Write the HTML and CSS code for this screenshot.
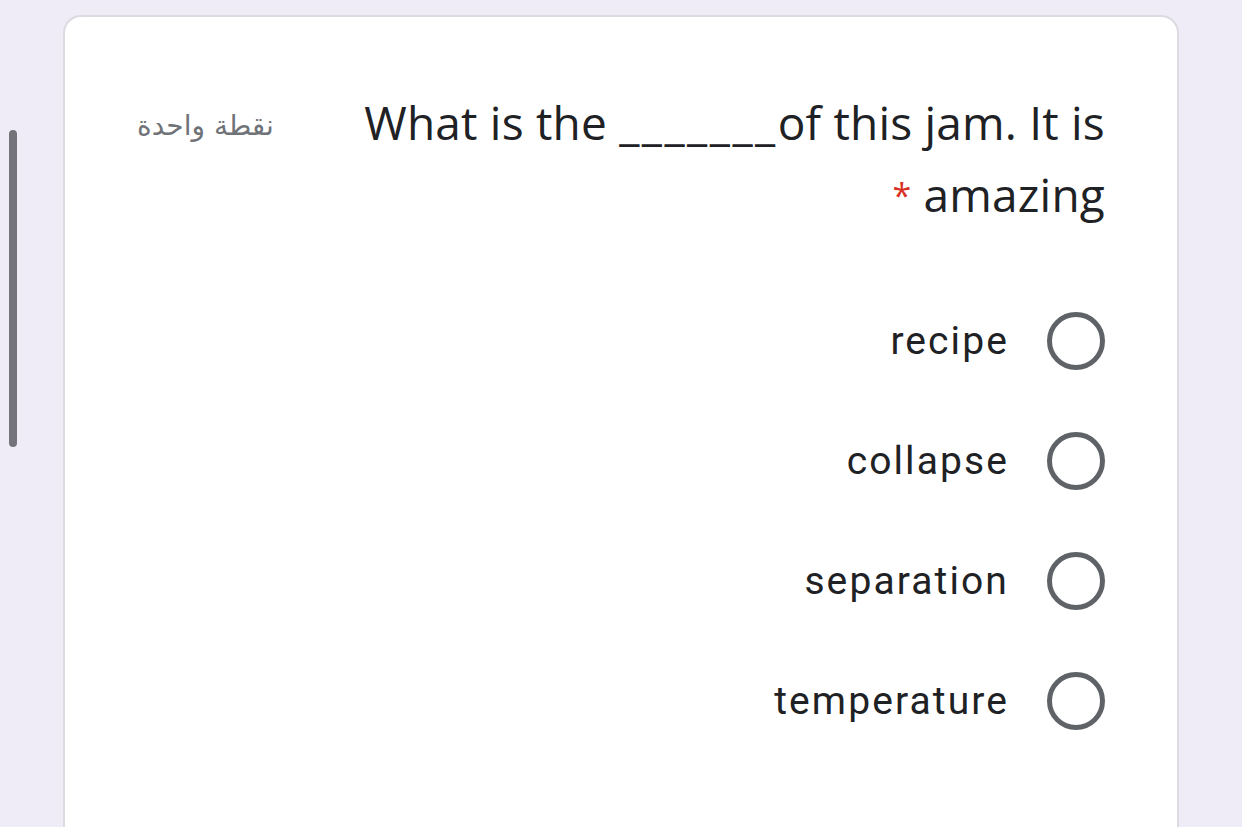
FILE: index.html
```html
<!DOCTYPE html>
<html lang="ar" dir="rtl">
<head>
<meta charset="utf-8">
<link rel="stylesheet" href="styles.css">
</head>
<body>
<div class="page">
  <div class="card">
    <div class="header">
      <div class="title" dir="rtl">What is the <span class="blank">_______</span>of this jam. It is amazing <span class="req">*</span></div>
      <div class="points">نقطة واحدة</div>
    </div>
    <div class="options">
      <label class="option"><span class="radio"></span><span class="label">recipe</span></label>
      <label class="option"><span class="radio"></span><span class="label">collapse</span></label>
      <label class="option"><span class="radio"></span><span class="label">separation</span></label>
      <label class="option"><span class="radio"></span><span class="label">temperature</span></label>
    </div>
  </div>
</div>
<div class="scrollbar"></div>
</body>
</html>
```
FILE: styles.css
```css
html, body {
  margin: 0;
  padding: 0;
  height: 100%;
  overflow: hidden;
  background: #efebf7;
}
.page {
  padding: 15px 63px 0 63px;
}
.card {
  background: #ffffff;
  border: 2px solid #dcdbe2;
  border-radius: 18px;
  height: 840px;
  padding: 69px 72px 0 72px;
  box-sizing: border-box;
  display: flex;
  flex-direction: column;
}
.header {
  display: flex;
  justify-content: space-between;
  align-items: flex-start;
  gap: 24px;
}
.title {
  font-family: "Open Sans", "Roboto", sans-serif;
  font-size: 46px;
  letter-spacing: 0.2px;
  line-height: 72px;
  color: #202124;
  flex: 1;
  text-align: right;
}
.blank {
  letter-spacing: 2.5px;
}
.req {
  color: #d93025;
  font-size: 34px;
  line-height: 1;
  vertical-align: 4px;
  margin-left: 2px;
}
.points {
  font-family: "DejaVu Sans", sans-serif;
  font-size: 28px;
  line-height: 72px;
  color: #6f7378;
  white-space: nowrap;
  padding-top: 4px;
}
.options {
  margin-top: 51px;
  display: flex;
  flex-direction: column;
}
.option {
  display: flex;
  align-items: center;
  height: 120px;
  gap: 38px;
}
.radio {
  width: 58px;
  height: 58px;
  box-sizing: border-box;
  border: 5px solid #5f6368;
  border-radius: 50%;
  flex: none;
}
.label {
  font-family: "Roboto", sans-serif;
  font-size: 39px;
  letter-spacing: 2.1px;
  color: #202124;
}
.scrollbar {
  position: absolute;
  left: 9px;
  top: 130px;
  width: 8px;
  height: 317px;
  border-radius: 4px;
  background: #747379;
}
```
